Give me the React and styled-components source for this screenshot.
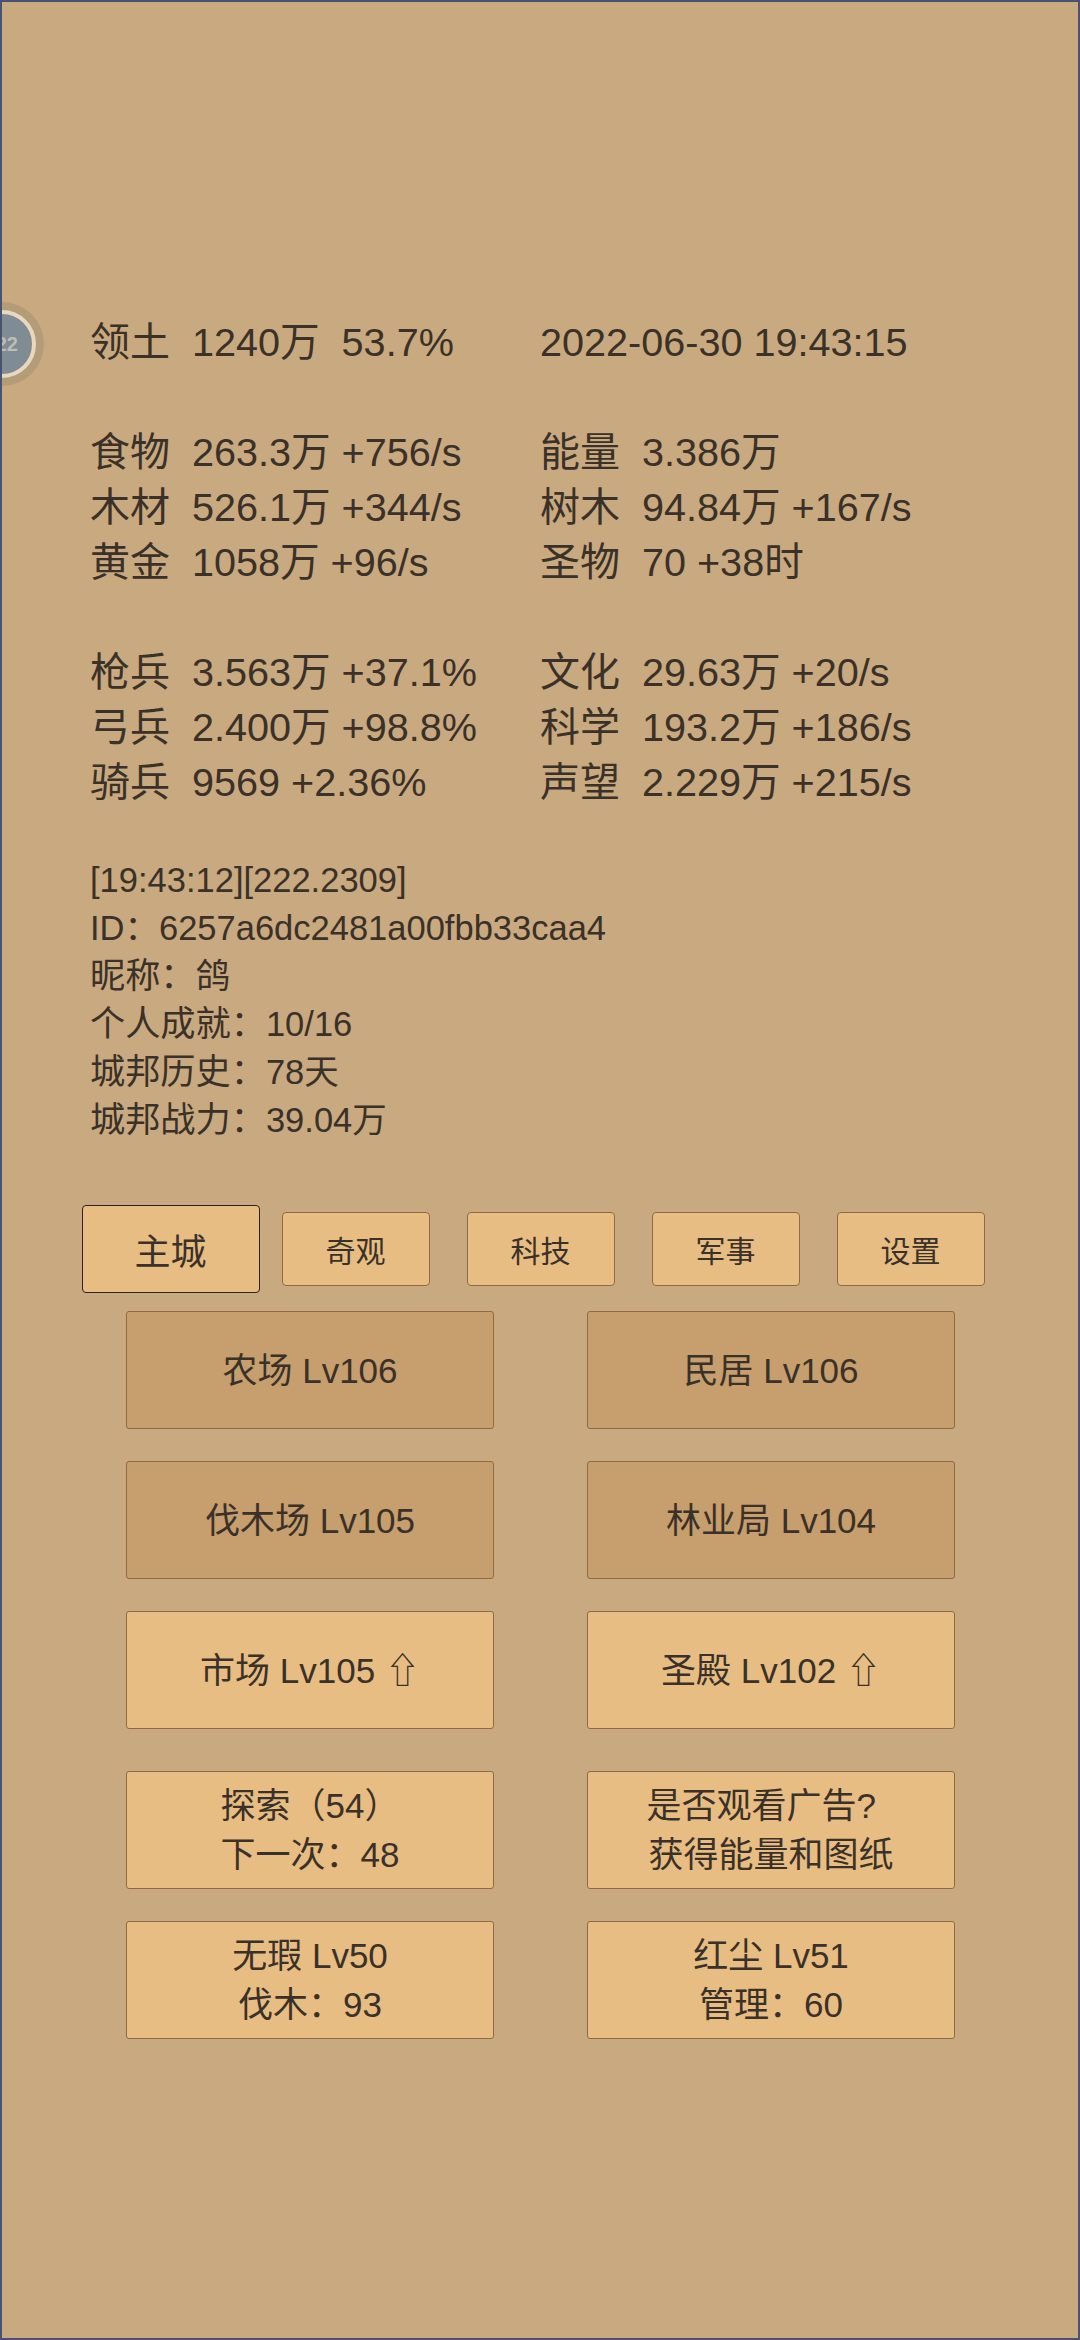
import React from "react";
import styled, { createGlobalStyle } from "styled-components";

const GlobalStyle = createGlobalStyle`
  html, body {
    margin: 0;
    padding: 0;
    background: #c9a97f;
  }
`;

const Page = styled.div`
  position: relative;
  box-sizing: border-box;
  width: 1080px;
  height: 2340px;
  overflow: hidden;
  padding: 313px 0 0 88px;
  background: #c9a97f;
  border: 2px solid #4a5274;
  color: #3a3129;
  font-family: "Liberation Sans", "Noto Sans CJK SC", sans-serif;
`;

const Avatar = styled.div`
  position: absolute;
  left: -42px;
  top: 300px;
  width: 84px;
  height: 84px;
  box-sizing: border-box;
  border-radius: 50%;
  background: #b59c79;
  display: flex;
  align-items: center;
  justify-content: center;
`;

const AvatarFace = styled.div`
  width: 68px;
  height: 68px;
  box-sizing: border-box;
  border-radius: 50%;
  border: 4px solid #e8d8be;
  background: #7f8c94;
  color: #bdbdb3;
  font-size: 20px;
  font-weight: bold;
  line-height: 60px;
  text-align: right;
  padding-right: 14px;
`;

const StatGrid = styled.div`
  display: grid;
  grid-template-columns: 450px 1fr;
  font-size: 39.6px;
  line-height: 55px;
  margin-bottom: 55px;
  white-space: pre;
`;

const InfoList = styled.div`
  font-size: 34.5px;
  line-height: 48px;
  margin-top: -9px;
`;

/* chinese labels sit a touch larger than the numbers beside them */
const Label = styled.span`
  font-size: ${(p) => p.$size}px;
`;

const TabRow = styled.div`
  display: grid;
  grid-template-columns: repeat(5, 185px);
  align-items: center;
  justify-items: center;
  margin: 61px 0 18px -12px;
  height: 88px;
`;

const Tab = styled.div`
  box-sizing: border-box;
  display: flex;
  align-items: center;
  justify-content: center;
  width: ${(p) => (p.$active ? "178px" : "148px")};
  height: ${(p) => (p.$active ? "88px" : "74px")};
  font-size: ${(p) => (p.$active ? "36px" : "30px")};
  background: #e8bd83;
  border: 1px solid ${(p) => (p.$active ? "#2f2010" : "#8e6b43")};
  border-radius: 4px;
`;

const ButtonGrid = styled.div`
  display: grid;
  grid-template-columns: 368px 368px;
  column-gap: 93px;
  row-gap: 32px;
  margin-left: 36px;
  margin-bottom: ${(p) => p.$gap || 0}px;
`;

const BuildButton = styled.div`
  box-sizing: border-box;
  height: 118px;
  display: flex;
  align-items: center;
  justify-content: center;
  text-align: center;
  font-size: 35px;
  line-height: 49px;
  white-space: pre;
  background: ${(p) => (p.$dim ? "#c79e6d" : "#e8bd83")};
  border: 1px solid #8e6b43;
  border-radius: 3px;
`;

const territory = [
  [["领土", "  1240万  53.7%"], ["", "2022-06-30 19:43:15"]],
];

const resources = [
  [["食物", "  263.3万 +756/s"], ["能量", "  3.386万"]],
  [["木材", "  526.1万 +344/s"], ["树木", "  94.84万 +167/s"]],
  [["黄金", "  1058万 +96/s"], ["圣物", "  70 +38时"]],
];

const troops = [
  [["枪兵", "  3.563万 +37.1%"], ["文化", "  29.63万 +20/s"]],
  [["弓兵", "  2.400万 +98.8%"], ["科学", "  193.2万 +186/s"]],
  [["骑兵", "  9569 +2.36%"], ["声望", "  2.229万 +215/s"]],
];

const info = [
  ["", "[19:43:12][222.2309]"],
  ["ID：", "6257a6dc2481a00fbb33caa4"],
  ["昵称：", "鸽"],
  ["个人成就：", "10/16"],
  ["城邦历史：", "78天"],
  ["城邦战力：", "39.04万"],
];

const tabs = ["主城", "奇观", "科技", "军事", "设置"];

const buildings = [
  { text: "农场 Lv106", dim: true },
  { text: "民居 Lv106", dim: true },
  { text: "伐木场 Lv105", dim: true },
  { text: "林业局 Lv104", dim: true },
  { text: "市场 Lv105 ⇧" },
  { text: "圣殿 Lv102 ⇧" },
];

const actions = [
  "探索（54）\n下一次：48",
  "是否观看广告?  \n获得能量和图纸",
  "无瑕 Lv50\n伐木：93",
  "红尘 Lv51\n管理：60",
];

function Stats({ rows }) {
  return (
    <StatGrid>
      {rows.flat().map(([label, value]) => (
        <div key={value}>
          <Label $size={40}>{label}</Label>
          {value}
        </div>
      ))}
    </StatGrid>
  );
}

export default function App() {
  return (
    <Page>
      <GlobalStyle />
      <Avatar>
        <AvatarFace>22</AvatarFace>
      </Avatar>
      <Stats rows={territory} />
      <Stats rows={resources} />
      <Stats rows={troops} />
      <InfoList>
        {info.map(([label, value]) => (
          <div key={value}>
            <Label $size={label === "ID：" ? 34.5 : 35.2}>{label}</Label>
            {value}
          </div>
        ))}
      </InfoList>
      <TabRow>
        {tabs.map((name, i) => (
          <Tab key={name} $active={i === 0}>
            {name}
          </Tab>
        ))}
      </TabRow>
      <ButtonGrid $gap={42}>
        {buildings.map((b) => (
          <BuildButton key={b.text} $dim={b.dim}>
            {b.text}
          </BuildButton>
        ))}
      </ButtonGrid>
      <ButtonGrid>
        {actions.map((text) => (
          <BuildButton key={text}>{text}</BuildButton>
        ))}
      </ButtonGrid>
    </Page>
  );
}
